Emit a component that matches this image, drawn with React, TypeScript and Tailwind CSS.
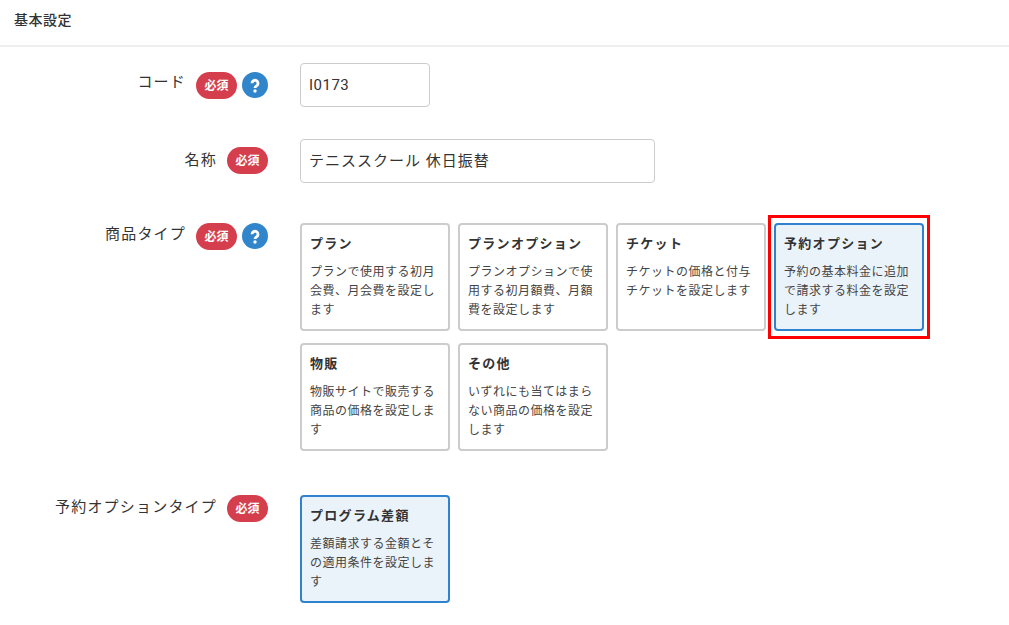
function Required({ top }: { top: string }) {
    return (
        <span className={`flex h-[27px] w-[41px] shrink-0 items-center justify-center rounded-full bg-[#d53f4d] text-[12px] font-bold text-white ${top}`}>
            必須
        </span>
    );
}

function Help({ top }: { top: string }) {
    return (
        <svg viewBox="0 0 26 26" className={`ml-[5px] h-[26px] w-[26px] shrink-0 ${top}`}>
            <circle cx="13" cy="13" r="13" fill="#3085cb" />
            <path d="M10 11.3a3 3 0 1 1 4.8 2.4c-1.2.8-1.8 1.3-1.8 2.3" fill="none" stroke="#fff" strokeWidth="2.8" />
            <circle cx="13" cy="19" r="1.7" fill="#fff" />
        </svg>
    );
}

function Label({ text, help, textTop, badgeTop }: { text: string; help?: boolean; textTop: string; badgeTop: string }) {
    return (
        <div className="flex w-[268px] shrink-0 items-start justify-end">
            <span className={`mr-[10px] text-[15px] leading-[22px] tracking-[1.2px] text-[#333] ${textTop}`}>{text}</span>
            <Required top={badgeTop} />
            {help && <Help top={badgeTop} />}
        </div>
    );
}

function Card({ title, desc, active, marked }: { title: string; desc: string; active?: boolean; marked?: boolean }) {
    return (
        <div className="relative">
            <div
                className={`h-[108px] w-[150px] rounded border-2 px-[8px] pt-[9px] ${
                    active ? "border-[#3182ce] bg-[#ebf3fa]" : "border-[#cccccc] bg-white"
                }`}
            >
                <div className="text-[13px] font-bold leading-[20px] tracking-[1.3px] text-[#333]">{title}</div>
                <div className="mt-[9px] text-[12px] leading-[19px] tracking-[0.5px] text-[#444]">{desc}</div>
            </div>
            {marked && <div className="absolute -inset-x-[6px] -inset-y-[8px] border-[3px] border-[#ff0000]" />}
        </div>
    );
}

export default function App() {
    return (
        <div className="h-[625px] w-[1009px] overflow-hidden bg-white font-['Roboto','Noto_Sans_CJK_JP',sans-serif] text-[#333]">
            <div className="flex h-[47px] items-center border-b-2 border-[#eeeeee] px-[14px] pb-[4px] text-[14px] font-medium tracking-[0.5px]">
                基本設定
            </div>

            <div className="mt-[16px] flex">
                <Label text="コード" help textTop="mt-[8px]" badgeTop="mt-[9px]" />
                <div className="ml-[32px]">
                    <input
                        readOnly
                        value="I0173"
                        className="h-[44px] w-[130px] rounded border border-[#cccccc] px-[8px] text-[15px] tracking-[0.5px] text-[#333] outline-none"
                    />
                </div>
            </div>

            <div className="mt-[32px] flex">
                <Label text="名称" textTop="mt-[10px]" badgeTop="mt-[8px]" />
                <div className="ml-[32px]">
                    <input
                        readOnly
                        value="テニススクール 休日振替"
                        className="h-[44px] w-[355px] rounded border border-[#cccccc] px-[8px] pb-[3px] text-[15px] tracking-[1px] text-[#333] outline-none"
                    />
                </div>
            </div>

            <div className="mt-[40px] flex">
                <Label text="商品タイプ" help textTop="mt-0" badgeTop="mt-0" />
                <div className="ml-[32px] flex w-[640px] flex-wrap gap-x-2 gap-y-3">
                    <Card title="プラン" desc="プランで使用する初月会費、月会費を設定します" />
                    <Card title="プランオプション" desc="プランオプションで使用する初月額費、月額費を設定します" />
                    <Card title="チケット" desc="チケットの価格と付与チケットを設定します" />
                    <Card title="予約オプション" desc="予約の基本料金に追加で請求する料金を設定します" active marked />
                    <Card title="物販" desc="物販サイトで販売する商品の価格を設定します" />
                    <Card title="その他" desc="いずれにも当てはまらない商品の価格を設定します" />
                </div>
            </div>

            <div className="mt-[44px] flex">
                <Label text="予約オプションタイプ" textTop="mt-[1px]" badgeTop="mt-0" />
                <div className="ml-[32px]">
                    <Card title="プログラム差額" desc="差額請求する金額とその適用条件を設定します" active />
                </div>
            </div>
        </div>
    );
}
